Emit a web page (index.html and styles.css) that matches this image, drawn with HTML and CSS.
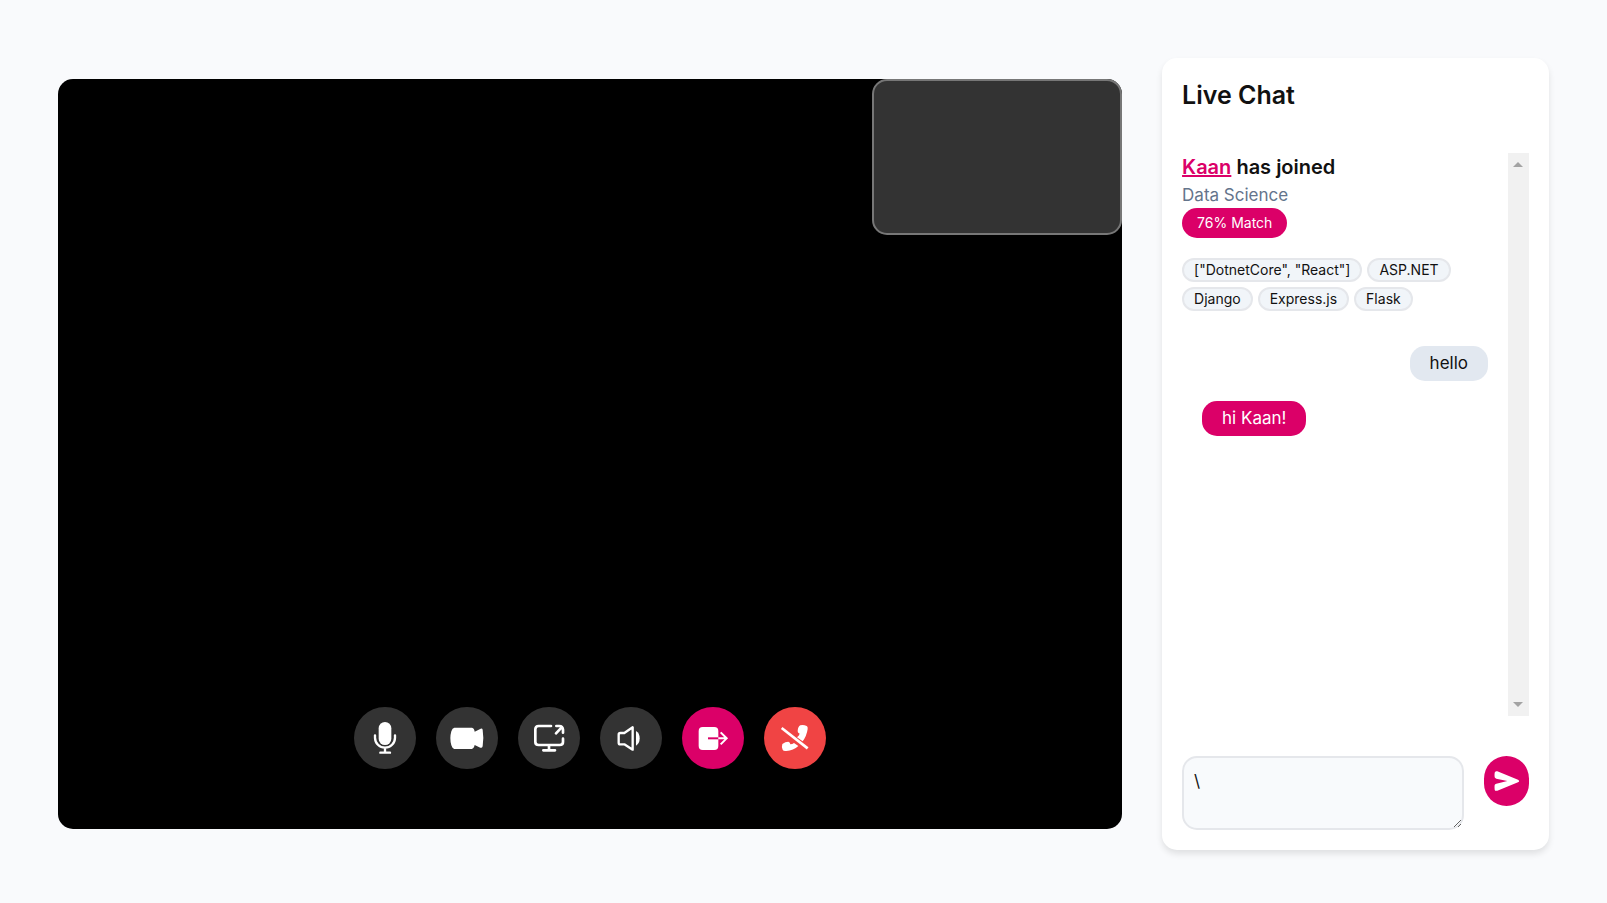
FILE: index.html
```html
<!DOCTYPE html>
<html lang="en">
<head>
    <meta charset="UTF-8" />
    <meta name="viewport" content="width=device-width, initial-scale=1" />
    <title>Live Chat</title>
    <link rel="stylesheet" href="styles.css">
</head>
<body>
    <main class="room">
        <section class="stage">
            <div class="preview"></div>
            <div class="controls">
                <button class="control-btn" type="button" aria-label="Microphone">
                    <svg class="icon" viewBox="0 0 108 108" fill="none" stroke="currentColor" stroke-width="7" stroke-linecap="round">
                        <rect x="35" y="6" width="38" height="69" rx="19" fill="currentColor" stroke="none" />
                        <path d="M24 46v7a30 30 0 0 0 60 0v-7M54 84v14M40 98h29" />
                    </svg>
                </button>
                <button class="control-btn" type="button" aria-label="Camera">
                    <svg class="icon" viewBox="0 0 108 108" fill="currentColor">
                        <path d="M16 23h53q7 1 8 12l18-9q5-1 6 3 4 25 0 50-2 6-7 4l-17-8q-2 11-9 12H16Q10 86 7 76q-6-21 0-42 3-10 9-11z" />
                    </svg>
                </button>
                <button class="control-btn" type="button" aria-label="Share screen">
                    <svg class="icon" viewBox="0 0 108 108" fill="none" stroke="currentColor" stroke-width="8" stroke-linecap="round" stroke-linejoin="round">
                        <path d="M60 18H23q-10 0-10 10v38q0 9 10 9h63q10 0 10-9V56M54 75v16M37 91h35M75 40l17-18M76 18h9q10 0 11 11v9" />
                    </svg>
                </button>
                <button class="control-btn" type="button" aria-label="Volume">
                    <svg class="icon" viewBox="0 0 108 108" fill="none" stroke="currentColor" stroke-width="7" stroke-linejoin="round">
                        <path d="M22 39h12l25-17v67L34 73H22q-5 0-5-5V44q0-5 5-5z" />
                        <path d="M69 33q11 6 11 22T69 77z" fill="currentColor" stroke="none" />
                    </svg>
                </button>
                <button class="control-btn control-next" type="button" aria-label="Next match">
                    <svg class="icon" viewBox="0 0 108 108" fill="none" stroke="currentColor" stroke-width="6">
                        <rect x="11" y="21" width="59" height="69" rx="12" fill="currentColor" stroke="none" />
                        <path class="icon-cut" d="M39 55h31" />
                        <path d="M70 55h25M77 37l18 18-18 18" />
                    </svg>
                </button>
                <button class="control-btn control-end" type="button" aria-label="End call">
                    <svg class="icon" viewBox="0 0 108 108" fill="currentColor">
                        <path d="M70 16q10-2 19 2 4 2 3 9-3 21-15 37L60 52q6-5 8-11-7-3-6-8 1-14 8-17z" />
                        <path d="M16 72q9-7 18-7 6 2 6 8 6 0 11-4l13 9q-15 14-36 15-9 1-11-4-4-9-1-17z" />
                        <path d="M14 24l78 61" stroke="currentColor" stroke-width="8" />
                    </svg>
                </button>
            </div>
        </section>

        <section class="chat">
            <h1>Live Chat</h1>

            <div class="chat-body">
                <div class="messages">
                    <div class="joined">
                        <h2><a href="#">Kaan</a> has joined</h2>
                        <p class="field">Data Science</p>
                        <span class="match">76% Match</span>
                    </div>
                    <ul class="skills">
                        <li>["DotnetCore", "React"]</li>
                        <li>ASP.NET</li>
                        <li>Django</li>
                        <li>Express.js</li>
                        <li>Flask</li>
                    </ul>
                    <div class="thread">
                        <p class="message sent">hello</p>
                        <p class="message received">hi Kaan!</p>
                    </div>
                </div>
                <div class="scroll-track" aria-hidden="true">
                    <span class="arrow arrow-up"></span>
                    <span class="arrow arrow-down"></span>
                </div>
            </div>

            <form class="composer">
                <textarea aria-label="Message">\</textarea>
                <button class="send-btn" type="button" aria-label="Send">
                    <svg class="icon" viewBox="0 0 108 108" fill="currentColor">
                        <path d="M28 25l62 25q7 4 0 8L28 83q-7 2-8-3-1-8 0-14 1-3 5-4l33-8-33-7q-4-1-5-4-1-6 0-14 1-6 8-4z" />
                    </svg>
                </button>
            </form>
        </section>
    </main>
</body>
</html>
```
FILE: styles.css
```css
* {
    margin: 0;
    padding: 0;
    box-sizing: border-box;
}
body {
    font-family: Inter, 'Open Sans', sans-serif;
    font-size: 17px;
    line-height: 26px;
    color: #111;
    background: #f9fafc;
}
.room {
    display: grid;
    grid-template-columns: minmax(0, 11fr) minmax(0, 4fr);
    align-items: center;
    gap: 40px;
    min-height: 100vh;
    padding: 58px 58px 53px;
}

/* video */
.stage {
    position: relative;
    display: flex;
    align-items: flex-end;
    justify-content: center;
    min-height: 750px;
    padding-bottom: 60px;
    border-radius: 15px;
    background: #000;
}
.preview {
    position: absolute;
    top: 0;
    right: 0;
    width: 250px;
    height: 156px;
    border: 2px solid #777;
    border-radius: 15px;
    background: #333;
}
.controls {
    display: flex;
    gap: 20px;
}
.control-btn {
    display: flex;
    align-items: center;
    justify-content: center;
    width: 62px;
    height: 62px;
    border: none;
    border-radius: 50%;
    background: #333;
    color: #fff;
    cursor: pointer;
}
.control-next {
    background: #db0068;
}
.control-end {
    background: #f04444;
}
.icon {
    width: 36px;
    height: 36px;
}
.icon-cut {
    stroke: #db0068;
}

/* chat */
.chat {
    align-self: stretch;
    display: flex;
    flex-direction: column;
    gap: 40px;
    padding: 20px;
    border-radius: 15px;
    background: #fff;
    box-shadow: 0 4px 6px rgba(0, 0, 0, 0.1);
}
.chat h1 {
    font-size: 25px;
    font-weight: 600;
    line-height: 35px;
}
.chat-body {
    flex: 1;
    display: flex;
}
.messages {
    flex: 1;
    min-width: 0;
}
.joined h2 {
    font-size: 20px;
    font-weight: 600;
    line-height: 29px;
}
.joined a {
    color: #db0068;
}
.field {
    color: #64748b;
}
.match {
    display: block;
    width: fit-content;
    padding: 0 15px;
    border-radius: 15px;
    background: #db0068;
    color: #fff;
    font-size: 14px;
    line-height: 30px;
}
.skills {
    display: flex;
    flex-wrap: wrap;
    gap: 5px;
    margin-top: 20px;
    list-style: none;
}
.skills li {
    padding: 0 10px;
    border: 2px solid #e5e7eb;
    border-radius: 12px;
    background: #f1f5f9;
    font-size: 14px;
    line-height: 20px;
}
.thread {
    display: flex;
    flex-direction: column;
    gap: 20px;
    padding: 35px 20px 0;
}
.message {
    padding: 0 20px;
    border-radius: 15px;
    line-height: 35px;
}
.sent {
    align-self: flex-end;
    background: #e2e8f0;
}
.received {
    align-self: flex-start;
    background: #db0068;
    color: #fff;
}
.scroll-track {
    display: flex;
    flex-direction: column;
    align-items: center;
    justify-content: space-between;
    width: 21px;
    padding: 9px 0;
    background: #f1f1f1;
}
.arrow {
    border: 5px solid transparent;
    border-top-width: 0;
    border-bottom: 5px solid #a3a3a3;
}
.arrow-down {
    transform: rotate(180deg);
}
.composer {
    display: flex;
    align-items: flex-start;
    gap: 20px;
}
.composer textarea {
    flex: 1;
    min-width: 0;
    height: 74px;
    padding: 10px;
    border: 2px solid #e5e7eb;
    border-radius: 15px;
    outline: none;
    background: #f8fafc;
    color: #111;
    font: inherit;
    resize: both;
}
.send-btn {
    display: flex;
    align-items: center;
    justify-content: center;
    width: 45px;
    height: 50px;
    border: none;
    border-radius: 23px;
    background: #db0068;
    color: #fff;
    cursor: pointer;
}
```
